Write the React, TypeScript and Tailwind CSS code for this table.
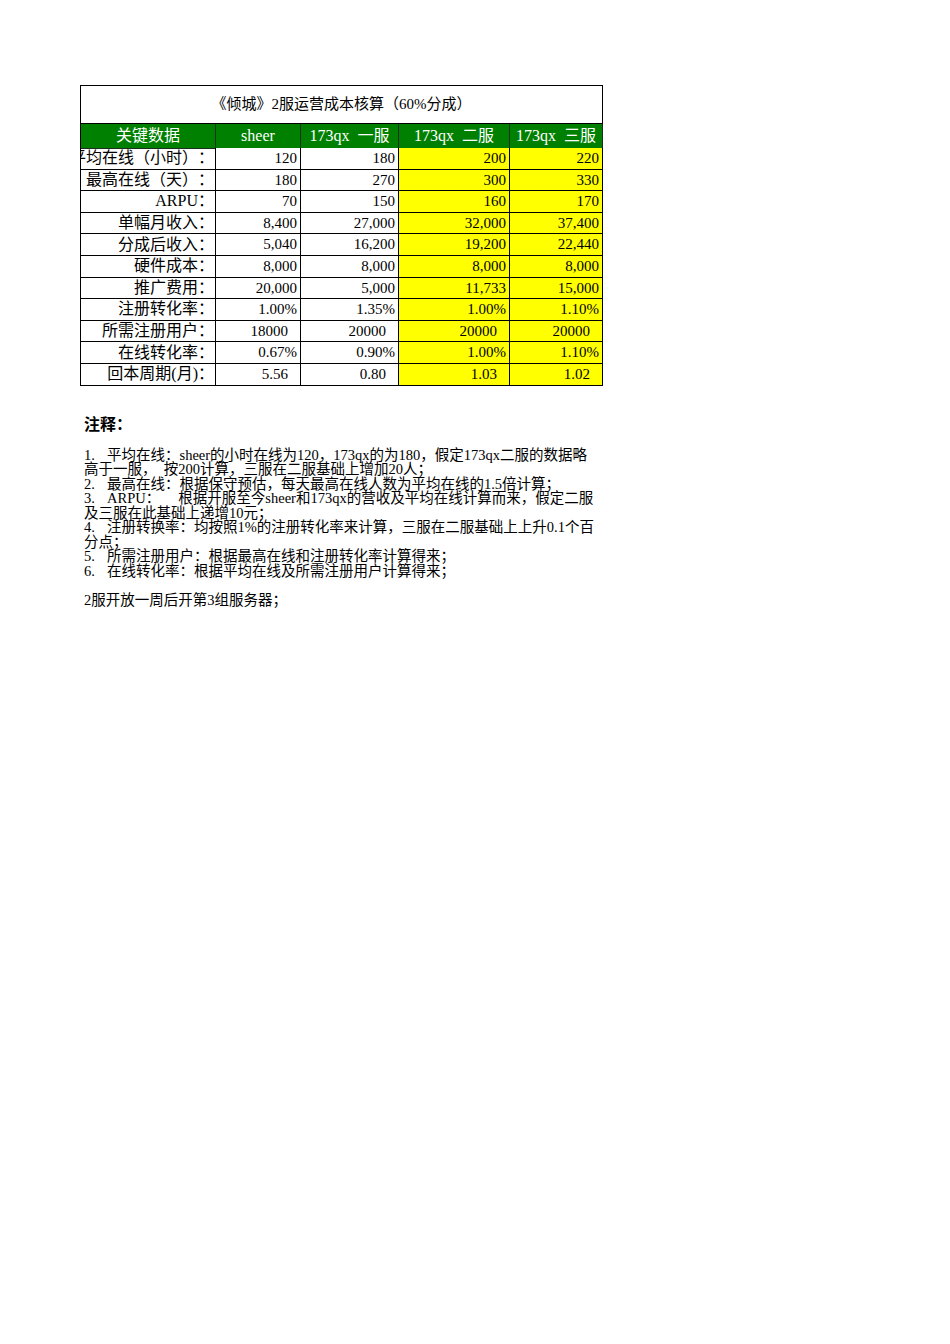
import React from "react";

// 成本核算表 rows: label, sheer, 一服, 二服, 三服, padded (right inset for plain numbers)
interface CostRow {
  label: string;
  values: string[];
  padded?: boolean;
}

const rows: CostRow[] = [
  { label: "平均在线（小时）：", values: ["120", "180", "200", "220"] },
  { label: "最高在线（天）：", values: ["180", "270", "300", "330"] },
  { label: "ARPU：", values: ["70", "150", "160", "170"] },
  { label: "单幅月收入：", values: ["8,400", "27,000", "32,000", "37,400"] },
  { label: "分成后收入：", values: ["5,040", "16,200", "19,200", "22,440"] },
  { label: "硬件成本：", values: ["8,000", "8,000", "8,000", "8,000"] },
  { label: "推广费用：", values: ["20,000", "5,000", "11,733", "15,000"] },
  { label: "注册转化率：", values: ["1.00%", "1.35%", "1.00%", "1.10%"] },
  { label: "所需注册用户：", values: ["18000", "20000", "20000", "20000"], padded: true },
  { label: "在线转化率：", values: ["0.67%", "0.90%", "1.00%", "1.10%"] },
  { label: "回本周期(月)：", values: ["5.56", "0.80", "1.03", "1.02"], padded: true },
];

const headers = ["关键数据", "sheer", "173qx  一服", "173qx  二服", "173qx  三服"];

// [number prefix, text]
const notes: [string, string][] = [
  ["1.", "平均在线：sheer的小时在线为120，173qx的为180，假定173qx二服的数据略"],
  ["", "高于一服，  按200计算，三服在二服基础上增加20人；"],
  ["2.", "最高在线：根据保守预估，每天最高在线人数为平均在线的1.5倍计算；"],
  ["3.", "ARPU：     根据开服至今sheer和173qx的营收及平均在线计算而来，假定二服"],
  ["", "及三服在此基础上递增10元；"],
  ["4.", "注册转换率：均按照1%的注册转化率来计算，三服在二服基础上上升0.1个百"],
  ["", "分点；"],
  ["5.", "所需注册用户：根据最高在线和注册转化率计算得来；"],
  ["6.", "在线转化率：根据平均在线及所需注册用户计算得来；"],
];

const cols = "grid grid-cols-[135px_85px_98px_111px_93px]";
const font = { fontFamily: '"Liberation Serif", "Noto Sans CJK SC", serif' };

const App = () => {
  return (
    <div
      className="w-[950px] min-h-[1344px] bg-white pt-[85px] pl-[80px] text-black [text-spacing-trim:space-all]"
      style={font}
    >
      <div className="w-[523px] border-l border-t border-black text-[15px]">
        <div className="h-[38px] border-r border-b border-black flex items-center justify-center pb-[1px]">
          《倾城》2服运营成本核算（60%分成）
        </div>

        <div className={`${cols} h-[24px] bg-[#008000] text-white text-[16px]`}>
          {headers.map((h) => (
            <div key={h} className="border-r border-b border-[#1c2e1c] flex items-center justify-center whitespace-pre">
              {h}
            </div>
          ))}
        </div>

        {rows.map((row) => (
          <div key={row.label} className={`${cols} h-[21.6px]`}>
            <div className="border-r border-b border-black flex items-center justify-end pr-[1px] overflow-hidden whitespace-nowrap text-[16px]">
              {row.label}
            </div>
            {row.values.map((v, i) => (
              <div
                key={i}
                className={`border-r border-b border-black flex items-center justify-end overflow-hidden whitespace-nowrap ${
                  row.padded ? "pr-[12px]" : "pr-[3px]"
                } ${i >= 2 ? "bg-[#ffff00]" : "bg-white"}`}
              >
                {v}
              </div>
            ))}
          </div>
        ))}
      </div>

      <div className="pl-[4px] pt-[26px]">
        <div className="text-[16px] font-bold leading-[22px]" style={{ fontFamily: '"Noto Sans CJK SC", sans-serif' }}>
          注释：
        </div>
        <div className="mt-[14px] text-[14.5px] leading-[14.5px]">
          {notes.map(([num, text], i) => (
            <div key={i} className="flex whitespace-pre">
              {num && <span className="w-[23px] shrink-0">{num}</span>}
              <span>{text}</span>
            </div>
          ))}
          <div className="mt-[14.5px] whitespace-pre">2服开放一周后开第3组服务器；</div>
        </div>
      </div>
    </div>
  );
};

export default App;
